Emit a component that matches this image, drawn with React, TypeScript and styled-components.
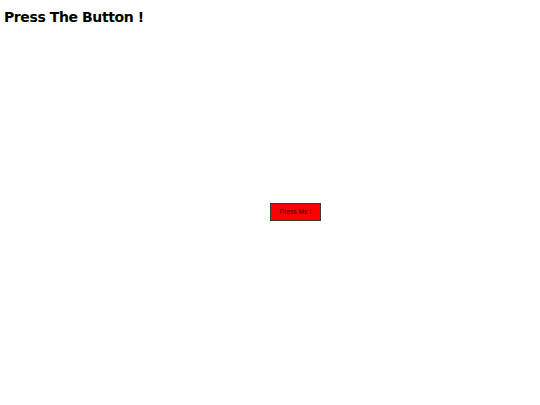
import React from "react";
import styled, { createGlobalStyle } from "styled-components";

const Global = createGlobalStyle`
  html, body { margin: 0; padding: 0; background: #fff; }
  body { font-family: "DejaVu Sans", Verdana, sans-serif; }
`;

const Page = styled.div`
  display: grid;
  grid-template-columns: 50% 1fr;
  grid-template-rows: 50vh auto;
  width: 100vw;
  height: 100vh;
`;

const Header = styled.div`
  grid-column: 1 / 3;
  grid-row: 1;
`;

const Title = styled.h1`
  margin: 0;
  padding: 9px 0 0 4px;
  font-family: "DejaVu Sans", Verdana, sans-serif;
  font-weight: bold;
  font-size: 14px;
  letter-spacing: -0.4px;
  line-height: 16px;
  color: #000;
`;

const Slot = styled.div`
  grid-column: 2;
  grid-row: 2;
`;

const PressButton = styled.button`
  display: block;
  width: 51px;
  height: 18px;
  padding: 0;
  background: #ff0000;
  border: 1px solid #3a3a3a;
  color: #111;
  font-family: "Liberation Sans", Arial, sans-serif;
  font-size: 6.7px;
  cursor: pointer;
`;

export default function App() {
  return (
    <>
      <Global />
      <Page>
        <Header>
          <Title>Press The Button !</Title>
        </Header>
        <Slot>
          <PressButton>Press Me !</PressButton>
        </Slot>
      </Page>
    </>
  );
}
